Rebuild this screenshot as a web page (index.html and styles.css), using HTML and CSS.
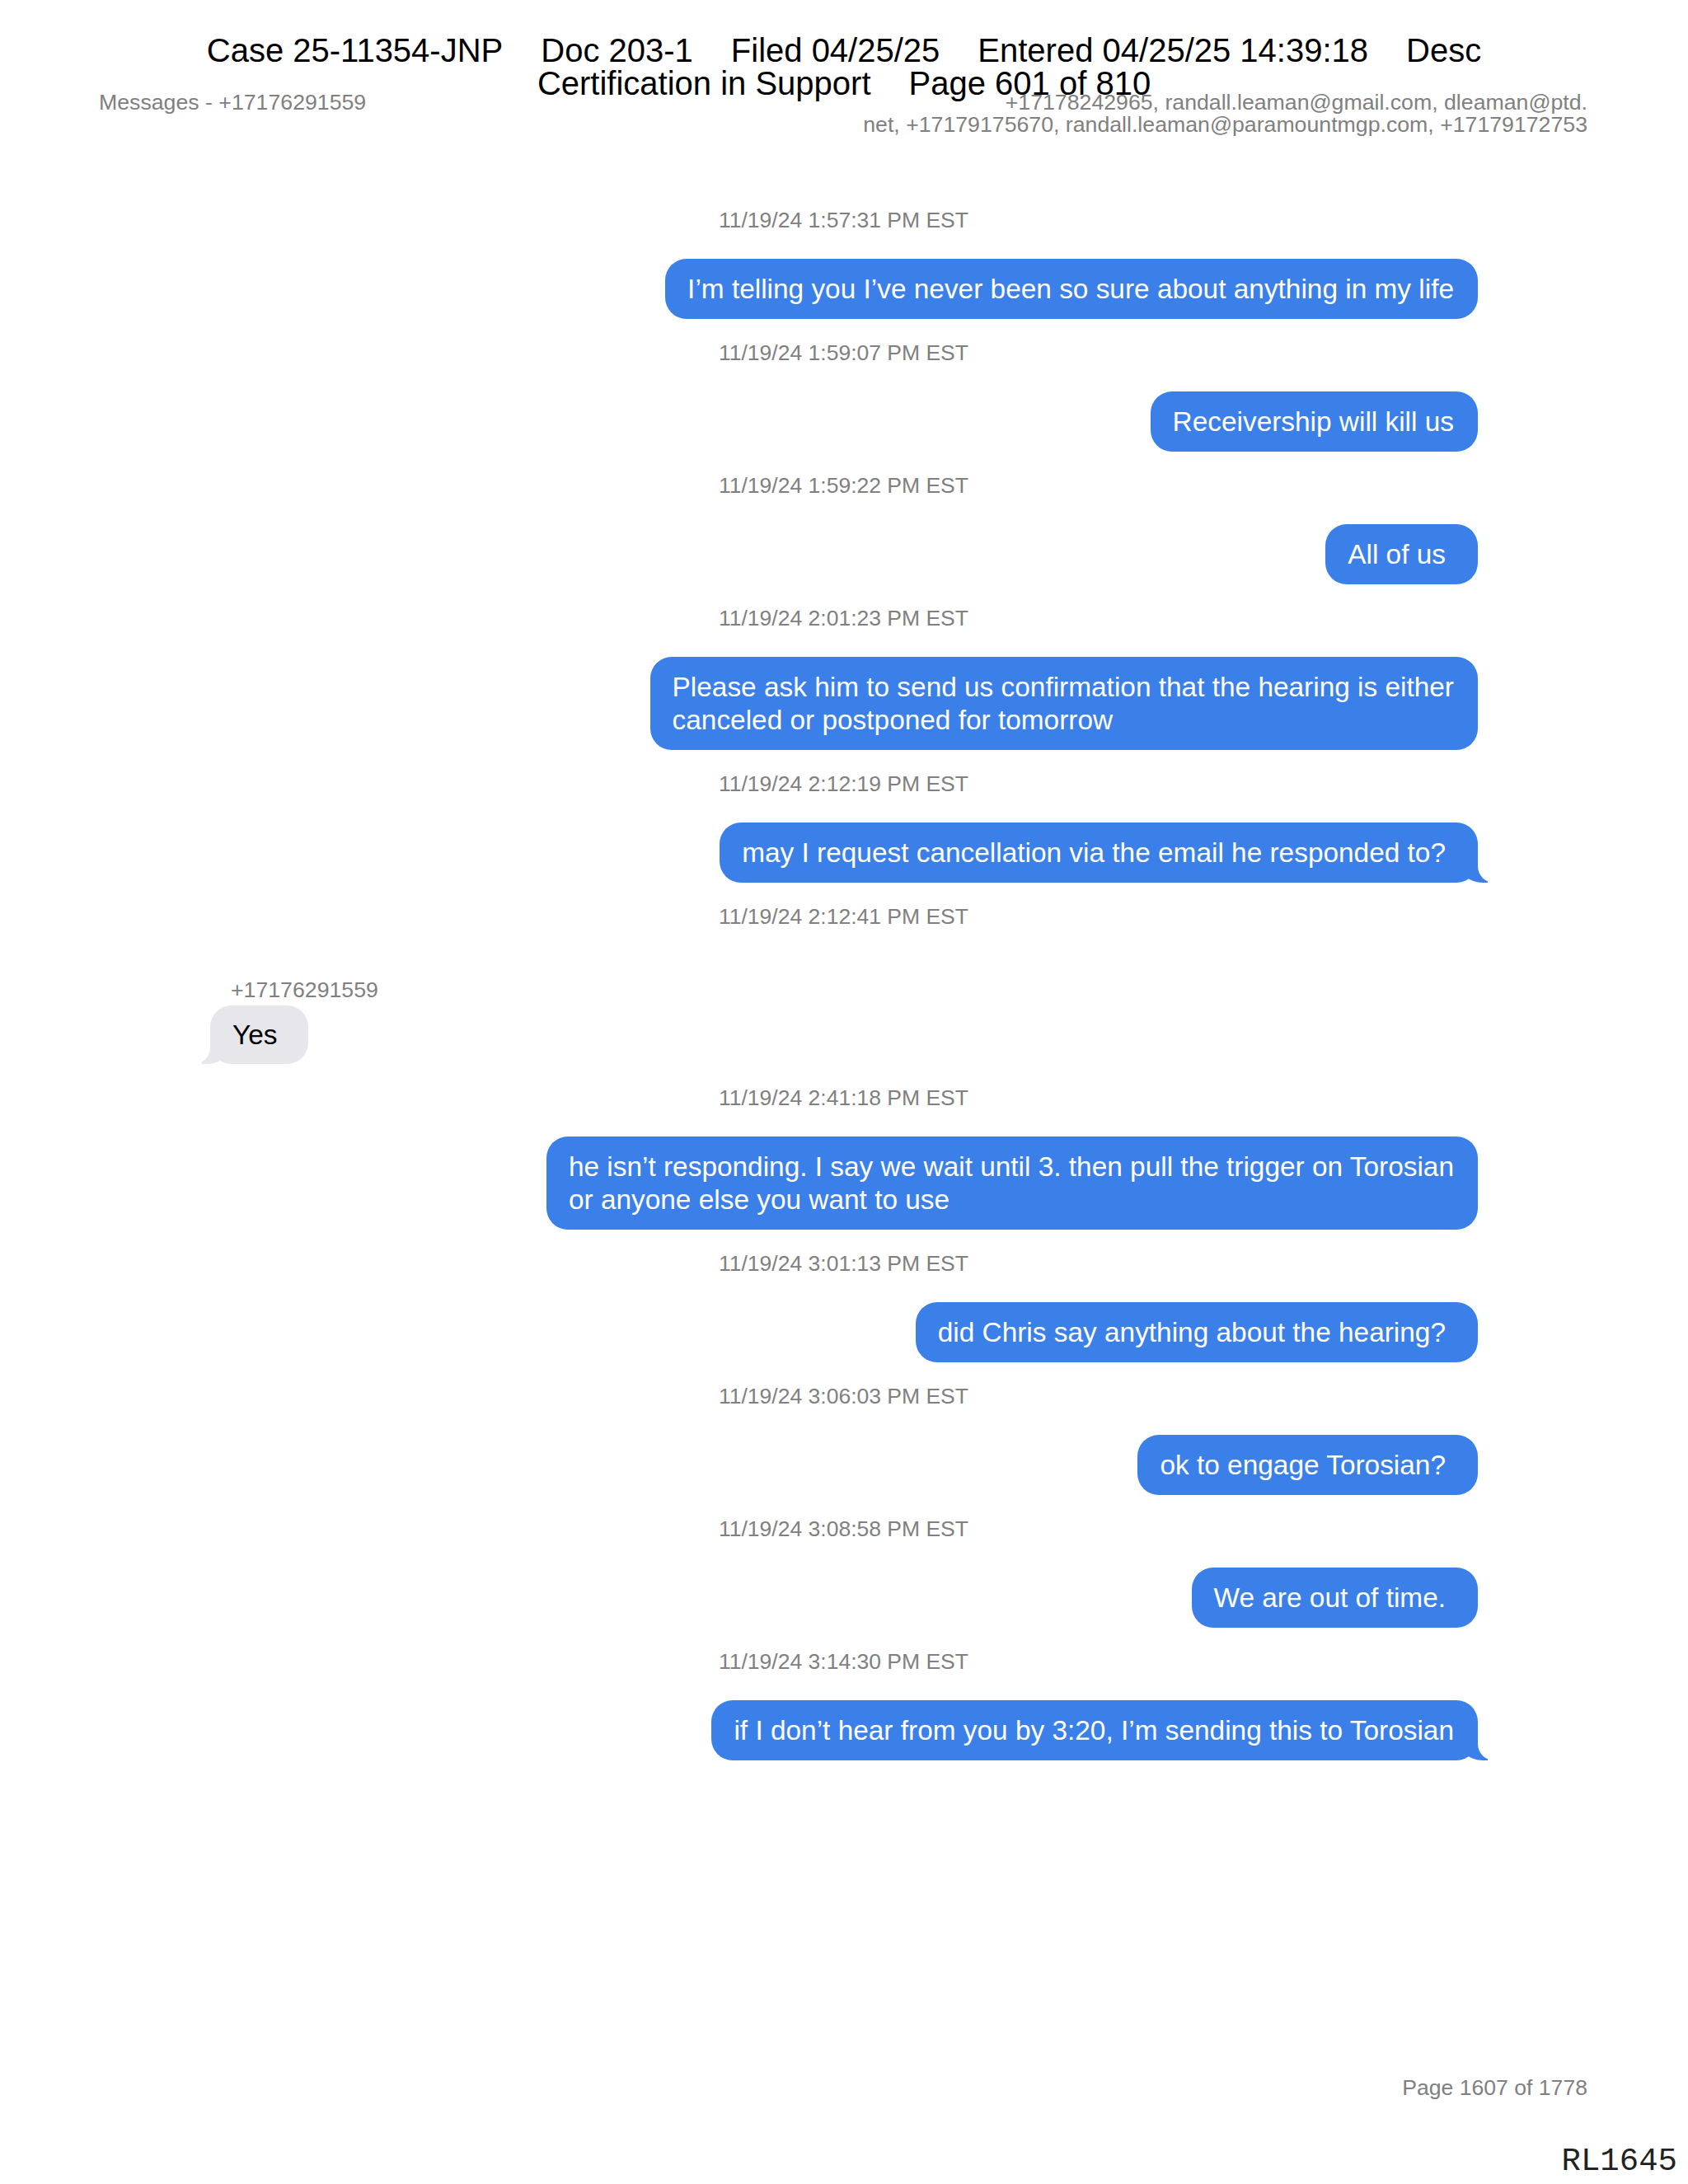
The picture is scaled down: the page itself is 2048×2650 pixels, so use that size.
FILE: index.html
```html
<!DOCTYPE html>
<html lang="en">
<head>
    <meta charset="UTF-8">
    <meta name="viewport" content="width=device-width, initial-scale=1.0">
    <title>Messages - +17176291559</title>
    <link rel="stylesheet" href="styles.css">
</head>
<body>
    <div class="sheet">
        <div class="stamp">
            <div class="stamp-line">
                <span>Case 25-11354-JNP</span>
                <span>Doc 203-1</span>
                <span>Filed 04/25/25</span>
                <span>Entered 04/25/25 14:39:18</span>
                <span>Desc</span>
            </div>
            <div class="stamp-line">
                <span>Certification in Support</span>
                <span>Page 601 of 810</span>
            </div>
        </div>

        <header class="meta">
            <div class="meta-title">Messages - +17176291559</div>
            <div class="meta-people">
                +17178242965, randall.leaman@gmail.com, dleaman@ptd.<br>
                net, +17179175670, randall.leaman@paramountmgp.com, +17179172753
            </div>
        </header>

        <main class="thread">
            <div class="time">11/19/24 1:57:31 PM EST</div>
            <div class="bubble sent">I’m telling you I’ve never been so sure about anything in my life</div>

            <div class="time">11/19/24 1:59:07 PM EST</div>
            <div class="bubble sent">Receivership will kill us</div>

            <div class="time">11/19/24 1:59:22 PM EST</div>
            <div class="bubble sent pad-end">All of us</div>

            <div class="time">11/19/24 2:01:23 PM EST</div>
            <div class="bubble sent">Please ask him to send us confirmation that the hearing is either<br>canceled or postponed for tomorrow</div>

            <div class="time">11/19/24 2:12:19 PM EST</div>
            <div class="bubble sent pad-end tail">may I request cancellation via the email he responded to?</div>

            <div class="time">11/19/24 2:12:41 PM EST</div>
            <div class="sender">+17176291559</div>
            <div class="bubble received tail">Yes</div>

            <div class="time">11/19/24 2:41:18 PM EST</div>
            <div class="bubble sent">he isn’t responding. I say we wait until 3. then pull the trigger on Torosian<br>or anyone else you want to use</div>

            <div class="time">11/19/24 3:01:13 PM EST</div>
            <div class="bubble sent pad-end">did Chris say anything about the hearing?</div>

            <div class="time">11/19/24 3:06:03 PM EST</div>
            <div class="bubble sent pad-end">ok to engage Torosian?</div>

            <div class="time">11/19/24 3:08:58 PM EST</div>
            <div class="bubble sent pad-end">We are out of time.</div>

            <div class="time">11/19/24 3:14:30 PM EST</div>
            <div class="bubble sent tail">if I don’t hear from you by 3:20, I’m sending this to Torosian</div>
        </main>

        <footer class="page-foot">Page 1607 of 1778</footer>
        <div class="bates">RL1645</div>
    </div>
</body>
</html>
```

FILE: styles.css
```css
:root {
    --blue: #3b7fe9;
    --grey-bubble: #e6e6eb;
    --grey-text: #808080;
    --ink: #000000;
}

body {
    margin: 0;
    background: #ffffff;
    font-family: "Liberation Sans", Arial, sans-serif;
    color: var(--ink);
}

.sheet {
    position: relative;
    min-height: 2650px;
    box-sizing: border-box;
    padding: 111px 122px 0 120px;
    display: flex;
    flex-direction: column;
}

/* court filing stamp sits over the page header */
.stamp {
    position: absolute;
    top: 41px;
    left: 0;
    right: 0;
    font-size: 40px;
    line-height: 40px;
    z-index: 2;
}

.stamp-line {
    display: flex;
    justify-content: center;
    gap: 46px;
    white-space: nowrap;
}

.meta {
    display: flex;
    justify-content: space-between;
    font-size: 26.7px;
    line-height: 27px;
    color: var(--grey-text);
}

.meta-people {
    text-align: right;
}

.thread {
    display: flex;
    flex-direction: column;
    margin: 87px 133px 0 135px;
}

.time {
    font-size: 26.5px;
    line-height: 30px;
    color: var(--grey-text);
    padding-left: 617px;
    margin-bottom: 32px;
}

.sender {
    font-size: 26.7px;
    line-height: 30px;
    color: var(--grey-text);
    padding-left: 25px;
    margin: 27px 0 4px;
}

.bubble {
    position: relative;
    z-index: 0;
    box-sizing: border-box;
    font-size: 33.4px;
    line-height: 40px;
    padding: 16.5px 29px 16.5px 27px;
    border-radius: 26px;
    margin-bottom: 26px;
    white-space: nowrap;
}

.sent {
    align-self: flex-end;
    background: var(--blue);
    color: #ffffff;
}

.pad-end {
    padding-right: 39px;
}

.received {
    align-self: flex-start;
    background: var(--grey-bubble);
    color: var(--ink);
    padding: 15.5px 38px 15.5px 27px;
}

.tail::before,
.tail::after {
    content: "";
    position: absolute;
    bottom: 0;
    height: 44px;
    z-index: -1;
}

.sent.tail::before {
    right: -12px;
    width: 36px;
    background: var(--blue);
    border-bottom-left-radius: 30px 26px;
}

.sent.tail::after {
    right: -48px;
    width: 48px;
    background: #ffffff;
    border-bottom-left-radius: 20px;
}

.received.tail::before {
    left: -10px;
    width: 36px;
    background: var(--grey-bubble);
    border-bottom-right-radius: 30px 26px;
}

.received.tail::after {
    left: -48px;
    width: 48px;
    background: #ffffff;
    border-bottom-right-radius: 20px;
}

.page-foot {
    margin-top: auto;
    margin-bottom: 102px;
    text-align: right;
    font-size: 26.6px;
    line-height: 30px;
    color: var(--grey-text);
}

.bates {
    position: absolute;
    right: 13px;
    bottom: 7px;
    font-family: "Liberation Mono", "Courier New", monospace;
    font-size: 39px;
    line-height: 39px;
    color: #222222;
}
```
